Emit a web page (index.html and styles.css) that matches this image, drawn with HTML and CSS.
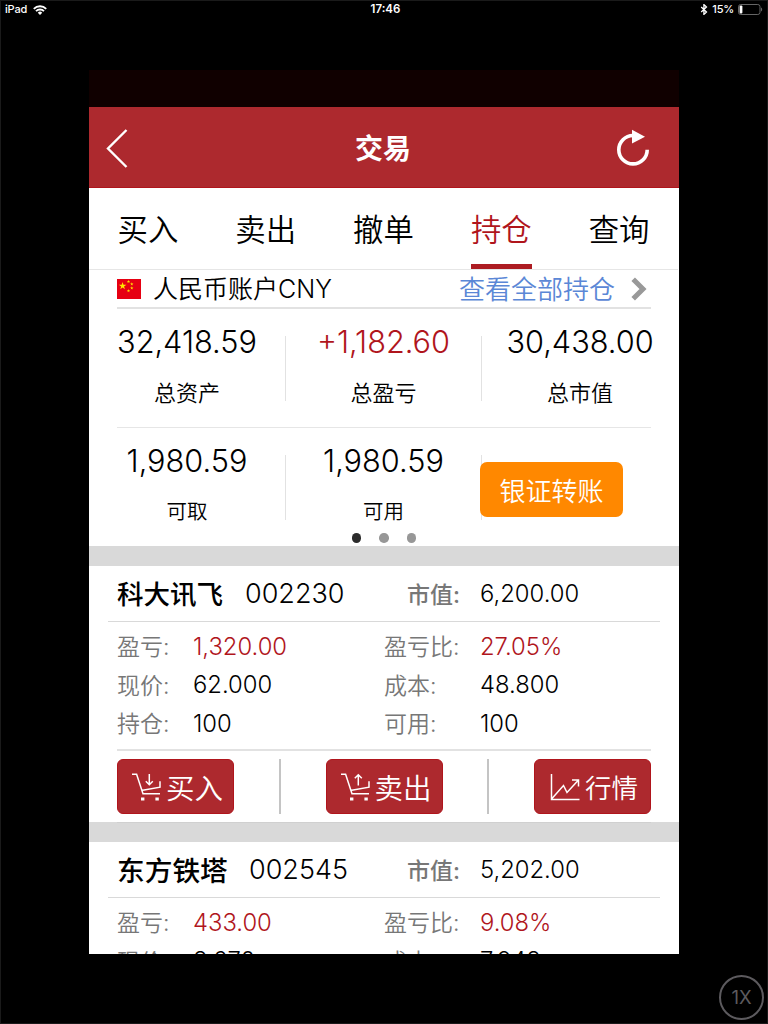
FILE: index.html
```
<!DOCTYPE html>
<html lang="zh-CN">
<head>
  <meta charset="UTF-8">
  <meta name="viewport" content="width=device-width, initial-scale=1.0">
  <title>交易</title>
  <link rel="stylesheet" href="styles.css">
</head>
<body>
  <div class="status-bar">
    <div class="status-left">
      <span>iPad</span>
      <svg width="14" height="10" viewBox="0 0 14 10" fill="none" stroke="#fff" stroke-width="1.9">
        <path d="M0.8 3.8a8.8 8.8 0 0 1 12.4 0"/>
        <path d="M3 6.1a5.7 5.7 0 0 1 8 0"/>
        <path d="M7 10L4.8 7.7a3.1 3.1 0 0 1 4.4 0z" fill="#fff" stroke="none"/>
      </svg>
    </div>
    <div class="status-time">17:46</div>
    <div class="status-right">
      <svg width="8" height="11" viewBox="0 0 7 11" fill="none" stroke="#fff" stroke-width="1.3">
        <path d="M0.7 3l5.3 5L3.4 10.4V0.6L6 3 0.7 8"/>
      </svg>
      <span>15%</span>
      <svg width="25" height="11" viewBox="0 0 25 11">
        <rect x="0.5" y="0.5" width="21.5" height="10" rx="2.2" fill="none" stroke="#666"/>
        <rect x="1.6" y="1.6" width="2.8" height="7.8" rx="1" fill="#fff"/>
        <path d="M23 3.5c1.6 0.6 1.6 3.4 0 4z" fill="#666"/>
      </svg>
    </div>
  </div>

  <main class="app">
    <div class="app-top"></div>
    <header class="nav">
      <svg class="back" width="24" height="40" viewBox="0 0 24 40" fill="none" stroke="#fff" stroke-width="2.4">
        <path d="M20.5 2L2 20.5 20.5 39"/>
      </svg>
      <h1>交易</h1>
      <svg class="refresh" width="34" height="38" viewBox="0 0 34 38">
        <path d="M17 6.5A14.2 14.2 0 1 0 31.2 20.7" fill="none" stroke="#fff" stroke-width="3.6"/>
        <path d="M16 0.8L29 7.7 16 14.6z" fill="#fff"/>
      </svg>
    </header>

    <nav class="tabs">
      <a>买入</a>
      <a>卖出</a>
      <a>撤单</a>
      <a class="active">持仓</a>
      <a>查询</a>
    </nav>

    <section class="account">
      <div class="account-head">
        <svg width="24" height="20" viewBox="0 0 24 20">
          <defs>
            <path id="star" d="M0-1L0.225-0.309 0.951-0.309 0.363 0.118 0.588 0.809 0 0.382-0.588 0.809-0.363 0.118-0.951-0.309-0.225-0.309z"/>
          </defs>
          <rect width="24" height="20" fill="#e60012"/>
          <g fill="#ffe600">
            <use href="#star" transform="translate(5.6 7) scale(4)"/>
            <use href="#star" transform="translate(11.5 2.6) scale(1.8)"/>
            <use href="#star" transform="translate(14.8 5) scale(1.8)"/>
            <use href="#star" transform="translate(14.8 9) scale(1.8)"/>
            <use href="#star" transform="translate(11.5 11.8) scale(1.8)"/>
          </g>
        </svg>
        <span class="account-name">人民币账户CNY</span>
        <a class="view-all">查看全部持仓</a>
        <svg class="chevron" width="16" height="24" viewBox="0 0 16 24" fill="none" stroke="#999" stroke-width="5">
          <path d="M2.2 2.2L12 12 2.2 21.8"/>
        </svg>
      </div>
      <div class="assets">
        <div class="cell"><b>32,418.59</b><span>总资产</span></div>
        <div class="cell"><b class="red">+1,182.60</b><span>总盈亏</span></div>
        <div class="cell"><b>30,438.00</b><span>总市值</span></div>
      </div>
      <div class="assets second">
        <div class="cell"><b>1,980.59</b><span>可取</span></div>
        <div class="cell"><b>1,980.59</b><span>可用</span></div>
        <div class="cell-btn"><button class="transfer">银证转账</button></div>
      </div>
      <div class="dots"><i class="on"></i><i></i><i></i></div>
    </section>

    <section class="stock">
      <div class="stock-head">
        <h2>科大讯飞</h2>
        <span class="code">002230</span>
        <span class="label">市值:</span>
        <span class="value">6,200.00</span>
      </div>
      <div class="detail">
        <span class="label">盈亏:</span><span class="value red">1,320.00</span>
        <span class="label">盈亏比:</span><span class="value red">27.05%</span>
        <span class="label">现价:</span><span class="value">62.000</span>
        <span class="label">成本:</span><span class="value">48.800</span>
        <span class="label">持仓:</span><span class="value">100</span>
        <span class="label">可用:</span><span class="value">100</span>
      </div>
      <div class="actions">
        <button>
          <svg width="29" height="28" viewBox="0 0 29 28" fill="none" stroke="#fff" stroke-width="1.5">
            <path d="M0 1.2h4.6L11 20.7h17M9.3 17.4L28 14.2V8.2M17.3 1v10.5M13.8 8.2l3.5 3.5 3.5-3.5"/>
            <path d="M9 24.5h3.4v3H9zM23.4 24.5h3.4v3h-3.4z" fill="#fff" stroke="none"/>
          </svg>
          <span>买入</span>
        </button>
        <i></i>
        <button>
          <svg width="29" height="28" viewBox="0 0 29 28" fill="none" stroke="#fff" stroke-width="1.5">
            <path d="M0 1.2h4.6L11 20.7h17M9.3 17.4L28 14.2V8.2M17.3 12.5V2M13.8 5.2l3.5-3.5 3.5 3.5"/>
            <path d="M9 24.5h3.4v3H9zM23.4 24.5h3.4v3h-3.4z" fill="#fff" stroke="none"/>
          </svg>
          <span>卖出</span>
        </button>
        <i></i>
        <button class="quote">
          <svg width="30" height="28" viewBox="0 0 30 28" fill="none" stroke="#fff" stroke-width="1.5">
            <path d="M1.5 1v25.5H29.5M2 25.5L13.5 12.5 17 19.5 28.5 7M22 7h6.5v6.5"/>
          </svg>
          <span>行情</span>
        </button>
      </div>
    </section>

    <section class="stock">
      <div class="stock-head">
        <h2 class="wide">东方铁塔</h2>
        <span class="code">002545</span>
        <span class="label">市值:</span>
        <span class="value">5,202.00</span>
      </div>
      <div class="detail">
        <span class="label">盈亏:</span><span class="value red">433.00</span>
        <span class="label">盈亏比:</span><span class="value red">9.08%</span>
        <span class="label">现价:</span><span class="value">8.670</span>
        <span class="label">成本:</span><span class="value">7.948</span>
      </div>
    </section>
  </main>

  <div class="zoom-btn">1X</div>
</body>
</html>
```
FILE: styles.css
```
* {
  box-sizing: border-box;
}

body {
  margin: 0;
  height: 1024px;
  overflow: hidden;
  background: #000;
  border: 1px solid #1a1a1a;
  font-family: Inter, "Noto Sans CJK SC", sans-serif;
  font-weight: 350;
  color: #000;
}

svg {
  display: block;
  flex: none;
}

h1, h2, button {
  margin: 0;
  font-family: inherit;
}

.red {
  color: #b0151c;
}

.status-bar {
  display: grid;
  grid-template-columns: 1fr auto 1fr;
  height: 17px;
  padding: 0 4px;
  color: #fff;
  font-size: 11px;
  font-weight: 500;
  line-height: 17px;
}

.status-left, .status-right {
  display: flex;
  align-items: center;
  gap: 6px;
}

.status-left {
  letter-spacing: -0.2px;
}

.status-right {
  justify-content: flex-end;
  gap: 4px;
  letter-spacing: -0.2px;
}

.status-time {
  padding-left: 3px;
  font-size: 11.5px;
  font-weight: 600;
}

.app {
  width: 590px;
  height: 884px;
  margin: 52px 0 0 88px;
  overflow: hidden;
  background: #fff;
}

.app-top {
  height: 37px;
  background: #100000;
}

.nav {
  display: grid;
  grid-template-columns: 1fr auto 1fr;
  align-items: center;
  height: 81px;
  padding-top: 2px;
  background: #ad292e;
  border-bottom: 1px solid #b0151c;
  color: #fff;
}

.nav h1 {
  padding: 0 2px 3px 0;
  font-size: 28px;
  font-weight: 700;
}

.back {
  margin-left: 17px;
}

.refresh {
  margin-right: 29px;
  justify-self: end;
}

.tabs {
  display: grid;
  grid-template-columns: repeat(5, 1fr);
  justify-items: center;
  height: 82px;
  margin-right: 1px;
  border-bottom: 1px solid #e6e6e6;
}

.tabs a {
  height: 81px;
  font-size: 30.4px;
  line-height: 85px;
}

.tabs .active {
  color: #b0151c;
  border-bottom: 5px solid #ad1c22;
}

.account {
  height: 296px;
  border-bottom: 20px solid #d9d9d9;
}

.account-head {
  display: flex;
  align-items: center;
  height: 39px;
  margin: 0 28px;
  border-bottom: 2px solid #e2e2e2;
  font-size: 25px;
  line-height: 35px;
}

.account-name {
  margin-left: 12px;
  padding-top: 2px;
}

.view-all {
  margin-left: auto;
  padding-top: 2px;
  color: #5b87d6;
  font-size: 26px;
}

.chevron {
  margin: 0 4px 0 16px;
}

.assets {
  display: grid;
  grid-template-columns: 169px 196px 169px;
  height: 119px;
  margin: 0 28px;
  border-bottom: 1px solid #e6e6e6;
}

.assets.second {
  border-bottom: 0;
  height: 101px;
}

.cell {
  display: flex;
  flex-direction: column;
  align-items: center;
  height: 65px;
  margin-top: 27px;
  border-right: 1px solid #e2e2e2;
}

.cell:first-child {
  padding-right: 28px;
}

.cell:nth-child(3) {
  padding-left: 27px;
  border-right: 0;
}

.cell b {
  margin-top: -16px;
  font-size: 30.7px;
  font-weight: 350;
  line-height: 44px;
  white-space: nowrap;
}

.cell span {
  margin-top: 12px;
  font-size: 22px;
  line-height: 34px;
}

.second .cell span {
  font-size: 20.5px;
}

.transfer {
  display: block;
  width: 143px;
  height: 55px;
  margin: 34px 0 0 -2px;
  padding: 0;
  background: #ff8800;
  border: 0;
  border-radius: 7px;
  color: #fff;
  font-size: 26px;
  font-weight: 350;
}

.dots {
  display: flex;
  justify-content: center;
  gap: 18px;
  margin-top: 4px;
}

.dots i {
  width: 9.5px;
  height: 9.5px;
  border-radius: 50%;
  background: #979797;
}

.dots .on {
  background: #2c2c2c;
}

.stock {
  height: 276px;
  border-bottom: 20px solid #d9d9d9;
}

.stock-head {
  display: flex;
  align-items: center;
  height: 56px;
  margin: 0 19px;
  padding-left: 9px;
  border-bottom: 1px solid #d9d9d9;
}

.stock-head h2 {
  width: 128px;
  padding-bottom: 2px;
  font-size: 26.5px;
  font-weight: 500;
}

.stock-head h2.wide {
  width: 132px;
  font-size: 27.7px;
}

.code {
  flex: 1;
  font-size: 27px;
}

.stock-head .label {
  width: 73px;
  font-weight: 500;
}

.stock-head .value {
  width: 180px;
}

.label {
  padding-bottom: 2px;
  color: #777;
  font-size: 23px;
}

.value {
  font-size: 23.8px;
}

.detail {
  display: grid;
  grid-template-columns: 76px 191px 96px 1fr;
  grid-auto-rows: 38.5px;
  align-items: center;
  height: 129px;
  margin: 0 28px;
  padding-top: 5px;
  border-bottom: 2px solid #e2e2e2;
}

.actions {
  display: flex;
  align-items: center;
  justify-content: space-between;
  height: 72px;
  margin: 0 28px;
  border-bottom: 1px solid #d0d0d0;
}

.actions button {
  display: flex;
  align-items: center;
  gap: 5px;
  width: 117px;
  height: 55px;
  padding: 0 0 0 14px;
  background: #ad292e;
  border: 1px solid #b0151c;
  border-radius: 6px;
  color: #fff;
  font-size: 28.5px;
  font-weight: 350;
  white-space: nowrap;
}

.actions .quote {
  padding-left: 15px;
  font-size: 26.5px;
}

.actions span {
  padding-bottom: 1px;
}

.actions i {
  width: 2px;
  height: 55px;
  background: #c4c4c4;
}

.zoom-btn {
  position: absolute;
  right: 4px;
  bottom: 4px;
  width: 45px;
  height: 45px;
  border: 2px solid #5c5a5e;
  border-radius: 50%;
  color: #5c5a5e;
  font-size: 18.5px;
  font-weight: 400;
  line-height: 41px;
  text-align: center;
}
```
